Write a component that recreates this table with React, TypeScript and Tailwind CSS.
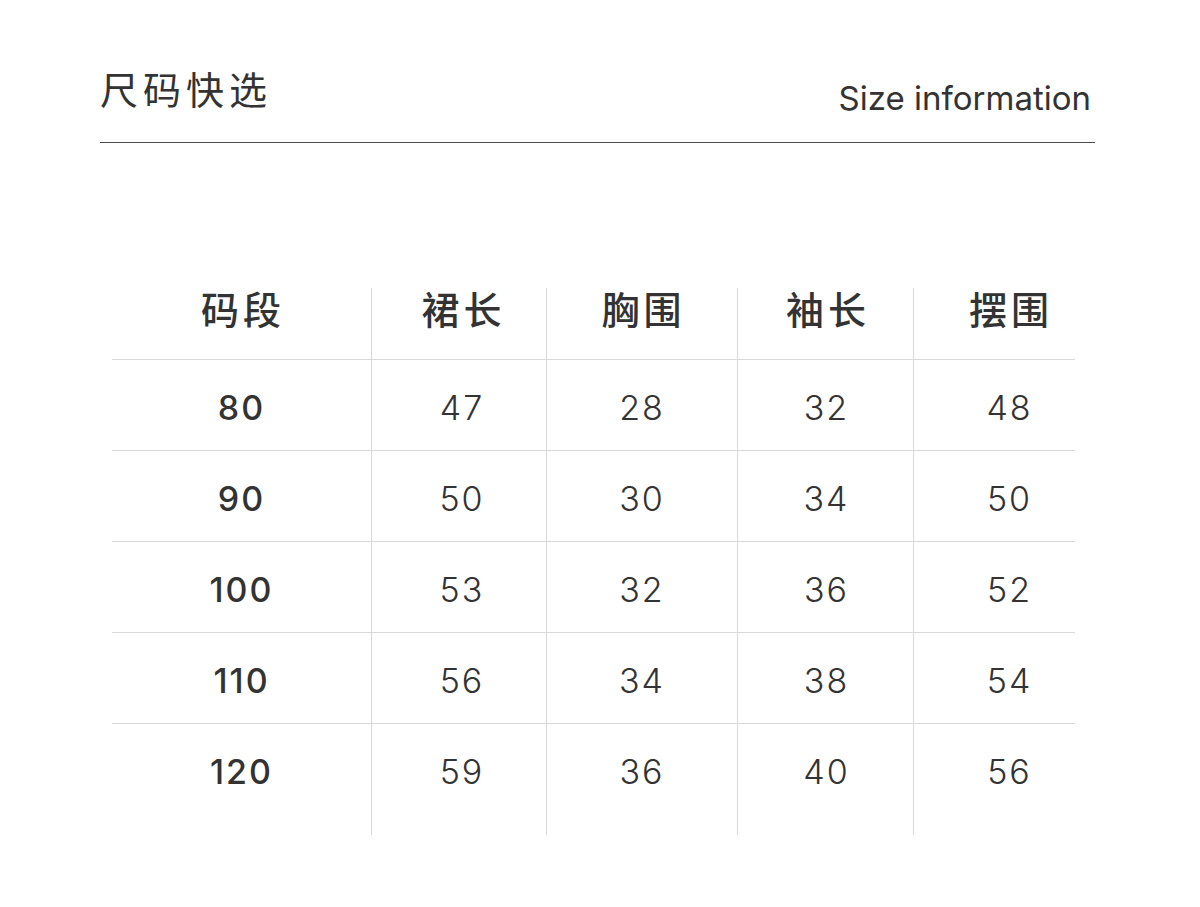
import React from "react";

const cols = ["码段", "裙长", "胸围", "袖长", "摆围"];
const rows = [
  ["80", "47", "28", "32", "48"],
  ["90", "50", "30", "34", "50"],
  ["100", "53", "32", "36", "52"],
  ["110", "56", "34", "38", "54"],
  ["120", "59", "36", "40", "56"],
];

const cjk = { fontFamily: '"Noto Sans CJK SC", "Noto Sans", sans-serif' };
const num = { fontFamily: 'Inter, "Noto Sans", sans-serif' };

const colPad = ["pl-0", "pl-[6px]", "pl-0", "pl-[2px]", "pl-[30px]"];

export default function App() {
  return (
    <div className="w-[1200px] h-[907px] bg-white text-[#333333] overflow-hidden">
      <div className="ml-[100px] w-[995px] h-[143px] flex justify-between items-start border-b border-[#4a4a4a]">
        <div className="mt-[63px] text-[38px] leading-[50px] tracking-[5px] font-normal" style={cjk}>
          尺码快选
        </div>
        <div className="mt-[76px] mr-[4px] text-[33px] leading-[44px] font-normal" style={num}>
          Size information
        </div>
      </div>
      <div className="ml-[112px] mt-[145px] w-[963px] grid grid-cols-[259px_175px_191px_176px_162px]">
        {cols.map((c, i) => (
          <div
            key={c}
            className={`h-[71px] flex justify-center items-start pt-0 ${colPad[i]} ${i > 0 ? "border-l border-[#d9d9d9]" : ""}`}
          >
            <span className="ml-[3px] text-[38px] leading-[40px] tracking-[4px] font-medium" style={cjk}>
              {c}
            </span>
          </div>
        ))}
        {rows.map((r, ri) =>
          r.map((v, ci) => (
            <div
              key={`${ri}-${ci}`}
              className={`${ri === rows.length - 1 ? "h-[112px]" : "h-[91px]"} flex justify-center items-start pt-[28px] border-t border-t-[#d9d9d9] ${colPad[ci]} ${ci > 0 ? "border-l border-l-[#d9d9d9]" : ""}`}
            >
              <span
                className={`text-[34px] leading-[40px] tracking-[2px] ${ci === 0 ? "font-medium" : "font-light"}`}
                style={num}
              >
                {v}
              </span>
            </div>
          ))
        )}
      </div>
    </div>
  );
}
